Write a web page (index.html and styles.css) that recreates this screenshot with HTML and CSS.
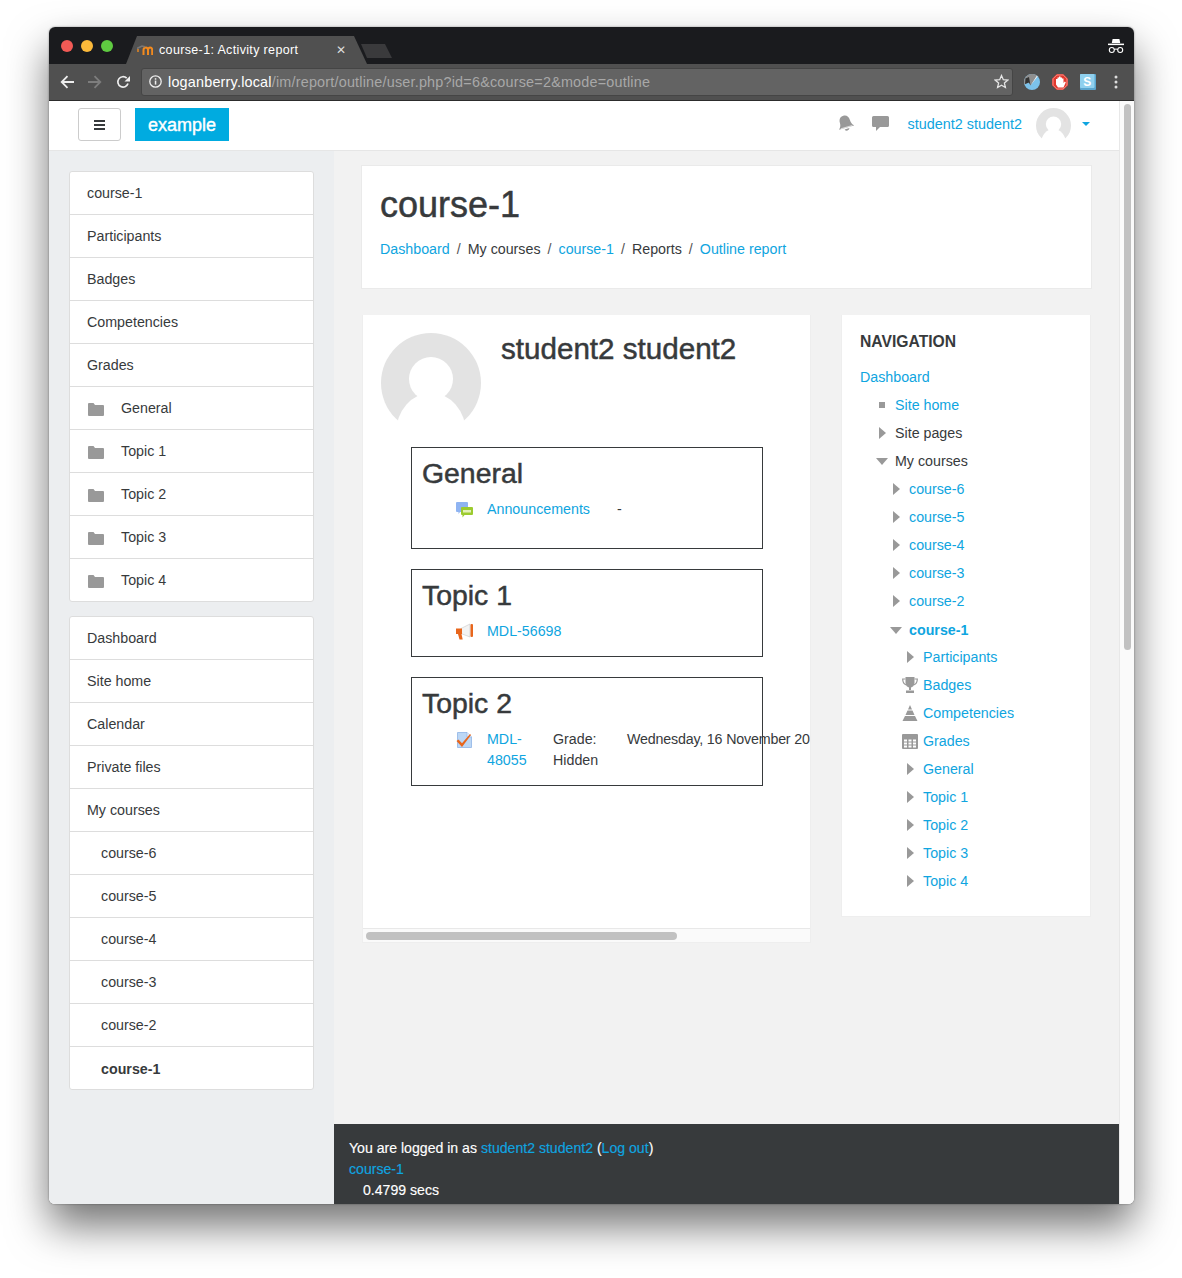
FILE: index.html
```html
<!DOCTYPE html>
<html lang="en">

<head>
    <meta charset="UTF-8" />
    <title>course-1: Activity report</title>
    <link rel="stylesheet" href="styles.css">
</head>

<body>
    <div class="window">
        <!-- Browser chrome -->
        <div class="titlebar">
            <div class="lights"><i class="red"></i><i class="yellow"></i><i class="green"></i></div>
            <div class="tab">
                <svg class="favicon" width="16" height="10" viewBox="0 0 16 10"><path d="M6.500 10V5c0-1.500 1-2.500 2.300-2.500S11 3.500 11 5v5M11 5c0-1.500 1-2.500 2.200-2.500S15.200 3.500 15.200 5v5" fill="none" stroke="#f28a1e" stroke-width="2"/><path d="M0 3.500 5 1l3 .8" fill="none" stroke="#777" stroke-width="1.600"/><path d="M1 4v3" stroke="#f28a1e" stroke-width="1.400"/></svg>
                <span class="tab-title">course-1: Activity report</span>
                <span class="tab-close">&#10005;</span>
            </div>
            <div class="new-tab"></div>
            <svg class="incognito" width="16" height="16" viewBox="0 0 16 16"><path d="M4.600 1h6.800l.8 4H3.800z" fill="#fff"/><rect x="0" y="5.600" width="16" height="1.500" fill="#fff"/><g fill="none" stroke="#fff" stroke-width="1.100"><circle cx="3.800" cy="12" r="2.500"/><circle cx="12.200" cy="12" r="2.500"/><path d="M6.300 11.500c1-.6 2.400-.6 3.400 0"/></g></svg>
        </div>
        <div class="toolbar">
            <span class="tool"><svg width="14" height="14" viewBox="0 0 14 14"><path d="M14 7H2M7.500 1.200 1.700 7l5.800 5.800" fill="none" stroke="#eee" stroke-width="1.800"/></svg></span>
            <span class="tool"><svg width="14" height="14" viewBox="0 0 14 14"><path d="M0 7h12M6.500 1.200 12.300 7l-5.800 5.800" fill="none" stroke="#7d7d7d" stroke-width="1.800"/></svg></span>
            <span class="tool"><svg width="14" height="14" viewBox="0 0 14 14"><path d="M12 8.500A5.200 5.200 0 1 1 10.700 3.200" fill="none" stroke="#eee" stroke-width="1.700"/><path d="M14 1v5.500H8.500z" fill="#eee"/></svg></span>
            <div class="address">
                <svg width="13" height="13" viewBox="0 0 13 13"><circle cx="6.500" cy="6.500" r="5.700" fill="none" stroke="#eee" stroke-width="1.300"/><rect x="5.800" y="5.600" width="1.500" height="4" fill="#eee"/><rect x="5.800" y="3.200" width="1.500" height="1.500" fill="#eee"/></svg>
                <span class="url"><b>loganberry.local</b>/im/report/outline/user.php?id=6&amp;course=2&amp;mode=outline</span>
                <svg class="star" width="15" height="15" viewBox="0 0 15 15"><path d="M7.500 1.500 9.300 5.700l4.500.4-3.400 3 1 4.400-3.900-2.300-3.900 2.300 1-4.400-3.400-3 4.500-.4z" fill="none" stroke="#e4e4e4" stroke-width="1.300"/></svg>
            </div>
            <div class="extensions">
                <span class="tool"><svg width="16" height="16" viewBox="0 0 16 16"><circle cx="8" cy="8" r="8" fill="#7cc2ea"/><path d="M8 0A8 8 0 0 0 0 8c0 1 .2 1.700.5 2.500L5 8.500l1.500 3L13.500 2A8 8 0 0 0 8 0z" fill="#8f8f8f"/><path d="M1.500 4.500 5 3l1.500 8.500L5 8.500 1 10z" fill="#333"/><path d="M13 1.500 6.500 11.500 13.500 2.500z" fill="#fff"/></svg></span>
                <span class="tool"><svg width="16" height="16" viewBox="0 0 16 16"><path d="M4.800 0h6.400L16 4.800v6.400L11.200 16H4.800L0 11.200V4.800z" fill="#e3382d"/><path d="M4.800 1h6.400L15 4.800v6.400L11.200 15H4.800L1 11.200V4.800z" fill="none" stroke="#f7b5b0" stroke-width=".7"/><path d="M4 8V5h1.500V3.500H7V2.500h1.500v1H10v1h1.500V9l1.300-1.500 1 .8L11.500 13.500H6L4 10.500z" fill="#fff"/></svg></span>
                <span class="tool"><svg width="16" height="16" viewBox="0 0 16 16"><rect width="16" height="16" rx="1" fill="#5ba6cf"/><rect width="14.500" height="14" rx="1" fill="#8fd0ee"/><text x="3.300" y="11.500" class="ext-s">S</text></svg></span>
                <span class="tool"><svg width="4" height="14" viewBox="0 0 4 14"><circle cx="2" cy="2" r="1.500" fill="#ddd"/><circle cx="2" cy="7" r="1.500" fill="#ddd"/><circle cx="2" cy="12" r="1.500" fill="#ddd"/></svg></span>
            </div>
        </div>

        <div class="viewport">
            <div class="page">
                <header class="navbar">
                    <button class="menu-btn"><span></span><span></span><span></span></button>
                    <a class="brand">example</a>
                    <div class="usernav">
                        <svg class="nav-icon" width="17" height="17" viewBox="0 0 17 17"><g transform="rotate(-16 8.500 8.500)"><path d="M8.500 .5c-3.300 0-5.200 2.400-5.200 5.500 0 3.600-1.100 5.200-2.800 6.800h16c-1.700-1.600-2.800-3.200-2.800-6.800 0-3.100-1.900-5.500-5.200-5.500z" fill="#999"/><path d="M6 14a2.600 2.600 0 0 0 5 0z" fill="#999"/><path d="M2.500 12.300h12" stroke="#fff" stroke-width=".6"/></g></svg>
                        <svg class="nav-icon chat" width="17" height="15" viewBox="0 0 17 15"><path d="M1.500 0h14A1.500 1.500 0 0 1 17 1.500v8a1.500 1.500 0 0 1-1.500 1.500H8l-4 4v-4H1.500A1.500 1.500 0 0 1 0 9.500v-8A1.500 1.500 0 0 1 1.500 0z" fill="#999"/></svg>
                        <a class="username">student2 student2</a>
                        <svg class="avatar-small" viewBox="0 0 100 100"><circle cx="50" cy="50" r="50" fill="#e3e3e3"/><circle cx="50" cy="46" r="22" fill="#fff"/><ellipse cx="50" cy="100" rx="35" ry="40" fill="#fff"/></svg>
                        <span class="caret"></span>
                    </div>
                </header>

                <div class="columns">
                    <aside class="sidebar">
                        <ul class="side-list">
                            <li>course-1</li>
                            <li>Participants</li>
                            <li>Badges</li>
                            <li>Competencies</li>
                            <li>Grades</li>
                            <li class="with-icon"><svg width="16" height="13" viewBox="0 0 16 13"><path d="M0 1a1 1 0 0 1 1-1h4.500L7 2h8a1 1 0 0 1 1 1v9a1 1 0 0 1-1 1H1a1 1 0 0 1-1-1z" fill="#999"/></svg>General</li>
                            <li class="with-icon"><svg width="16" height="13" viewBox="0 0 16 13"><path d="M0 1a1 1 0 0 1 1-1h4.500L7 2h8a1 1 0 0 1 1 1v9a1 1 0 0 1-1 1H1a1 1 0 0 1-1-1z" fill="#999"/></svg>Topic 1</li>
                            <li class="with-icon"><svg width="16" height="13" viewBox="0 0 16 13"><path d="M0 1a1 1 0 0 1 1-1h4.500L7 2h8a1 1 0 0 1 1 1v9a1 1 0 0 1-1 1H1a1 1 0 0 1-1-1z" fill="#999"/></svg>Topic 2</li>
                            <li class="with-icon"><svg width="16" height="13" viewBox="0 0 16 13"><path d="M0 1a1 1 0 0 1 1-1h4.500L7 2h8a1 1 0 0 1 1 1v9a1 1 0 0 1-1 1H1a1 1 0 0 1-1-1z" fill="#999"/></svg>Topic 3</li>
                            <li class="with-icon"><svg width="16" height="13" viewBox="0 0 16 13"><path d="M0 1a1 1 0 0 1 1-1h4.500L7 2h8a1 1 0 0 1 1 1v9a1 1 0 0 1-1 1H1a1 1 0 0 1-1-1z" fill="#999"/></svg>Topic 4</li>
                        </ul>
                        <ul class="side-list">
                            <li>Dashboard</li>
                            <li>Site home</li>
                            <li>Calendar</li>
                            <li>Private files</li>
                            <li>My courses</li>
                            <li class="nested">course-6</li>
                            <li class="nested">course-5</li>
                            <li class="nested">course-4</li>
                            <li class="nested">course-3</li>
                            <li class="nested">course-2</li>
                            <li class="nested current">course-1</li>
                        </ul>
                    </aside>

                    <main class="main">
                        <div class="course-header">
                            <h1>course-1</h1>
                            <ol class="breadcrumb">
                                <li><a>Dashboard</a></li>
                                <li>My courses</li>
                                <li><a>course-1</a></li>
                                <li>Reports</li>
                                <li><a>Outline report</a></li>
                            </ol>
                        </div>

                        <div class="content-row">
                            <section class="region">
                                <div class="region-scroll">
                                    <div class="user-head">
                                        <svg class="avatar" viewBox="0 0 100 100"><circle cx="50" cy="50" r="50" fill="#e3e3e3"/><circle cx="50" cy="46" r="22" fill="#fff"/><ellipse cx="50" cy="100" rx="35" ry="40" fill="#fff"/></svg>
                                        <h2>student2 student2</h2>
                                    </div>

                                    <div class="outline-section first">
                                        <h3>General</h3>
                                        <div class="activity">
                                            <svg class="activity-icon" width="17" height="16" viewBox="0 0 17 16"><path d="M1 0h10a1 1 0 0 1 1 1v8a1 1 0 0 1-1 1H4l-1.500 2V10H1a1 1 0 0 1-1-1V1a1 1 0 0 1 1-1z" fill="#8fb4f2"/><path d="M6 5h10a1 1 0 0 1 1 1v6a1 1 0 0 1-1 1H8.500L6.500 15.500V13H6a1 1 0 0 1-1-1V6a1 1 0 0 1 1-1z" fill="#9ccb2f"/><rect x="7" y="8" width="8" height="2.500" fill="#e2f0b8"/></svg>
                                            <a class="activity-name wide">Announcements</a>
                                            <span>-</span>
                                        </div>
                                    </div>

                                    <div class="outline-section">
                                        <h3>Topic 1</h3>
                                        <div class="activity">
                                            <svg class="activity-icon" width="17" height="16" viewBox="0 0 17 16"><path d="M5 4.500 14 0v13L5 9.500z" fill="#f3f3f3" stroke="#c8c8c8" stroke-width=".6"/><path d="M0 4.500h6v5.500H0z" fill="#e8661c"/><path d="M2 10h3.500l1.200 5.500H3.500z" fill="#e8661c"/><rect x="14.500" y="0" width="2.500" height="13" rx="1" fill="#e8661c"/></svg>
                                            <a class="activity-name">MDL-56698</a>
                                        </div>
                                    </div>

                                    <div class="outline-section">
                                        <h3>Topic 2</h3>
                                        <div class="activity">
                                            <svg class="activity-icon" width="16" height="16" viewBox="0 0 16 16"><path d="M1 .5h9.500L15 5v10.500H1z" fill="#bcd7f5" stroke="#8fb4e6" stroke-width=".8"/><path d="M10.500 .5V5H15" fill="#e6effa" stroke="#8fb4e6" stroke-width=".6"/><path d="M0 9 2 7.500l3.500 3.800L13.500 2l1 1L5.500 15z" fill="#e8661c"/></svg>
                                            <a class="activity-name narrow">MDL-48055</a>
                                            <span class="activity-grade">Grade: Hidden</span>
                                            <span class="activity-date">Wednesday, 16 November 20</span>
                                        </div>
                                    </div>
                                </div>
                                <div class="h-scrollbar"><span class="h-thumb"></span></div>
                            </section>

                            <section class="nav-block">
                                <h4>NAVIGATION</h4>
                                <ul class="tree">
                                    <li><p><a>Dashboard</a></p>
                                        <ul>
                                            <li><p><i class="leaf"></i><a>Site home</a></p></li>
                                            <li><p><i class="closed"></i>Site pages</p></li>
                                            <li><p><i class="open"></i>My courses</p>
                                                <ul>
                                                    <li><p><i class="closed"></i><a>course-6</a></p></li>
                                                    <li><p><i class="closed"></i><a>course-5</a></p></li>
                                                    <li><p><i class="closed"></i><a>course-4</a></p></li>
                                                    <li><p><i class="closed"></i><a>course-3</a></p></li>
                                                    <li><p><i class="closed"></i><a>course-2</a></p></li>
                                                    <li><p class="active-course"><i class="open"></i><a>course-1</a></p>
                                                        <ul>
                                                            <li><p><i class="closed"></i><a>Participants</a></p></li>
                                                            <li><p><svg class="tree-icon" width="16" height="16" viewBox="0 0 16 16"><path d="M3.500 0h9v6a4.500 4.500 0 0 1-9 0z" fill="#999"/><path d="M3.500 2H.7c0 3 1 5 3.600 6M12.500 2h2.800c0 3-1 5-3.600 6" fill="none" stroke="#999" stroke-width="1.200"/><path d="M7 10h2v3H7zM4 13.500h8V16H4z" fill="#999"/></svg><a>Badges</a></p></li>
                                                            <li><p><svg class="tree-icon" width="16" height="16" viewBox="0 0 16 16"><path d="M8 0l2 4.500H6zM5.500 5.500h5l2 4.500h-9zM3 11h10l2.500 5H.5z" fill="#999"/></svg><a>Competencies</a></p></li>
                                                            <li><p><svg class="tree-icon" width="16" height="16" viewBox="0 0 16 16"><path d="M1 1h14a1 1 0 0 1 1 1v13a1 1 0 0 1-1 1H1a1 1 0 0 1-1-1V2a1 1 0 0 1 1-1z" fill="#999"/><path d="M2 6.500h3v2H2zM6.500 6.500h3v2h-3zM11 6.500h3v2h-3zM2 9.500h3v2H2zM6.500 9.500h3v2h-3zM11 9.500h3v2h-3zM2 12.500h3v2H2zM6.500 12.500h3v2h-3zM11 12.500h3v2h-3z" fill="#fff"/></svg><a>Grades</a></p></li>
                                                            <li><p><i class="closed"></i><a>General</a></p></li>
                                                            <li><p><i class="closed"></i><a>Topic 1</a></p></li>
                                                            <li><p><i class="closed"></i><a>Topic 2</a></p></li>
                                                            <li><p><i class="closed"></i><a>Topic 3</a></p></li>
                                                            <li><p><i class="closed"></i><a>Topic 4</a></p></li>
                                                        </ul>
                                                    </li>
                                                </ul>
                                            </li>
                                        </ul>
                                    </li>
                                </ul>
                            </section>
                        </div>

                        <footer class="footer">
                            <div>You are logged in as <a>student2 student2</a> (<a>Log out</a>)</div>
                            <div><a>course-1</a></div>
                            <div class="perf">0.4799 secs</div>
                        </footer>
                    </main>
                </div>
            </div>
            <div class="v-scrollbar"><span class="v-thumb"></span></div>
        </div>
    </div>
</body>

</html>
```

FILE: styles.css
```css
* {
    box-sizing: border-box;
}

html {
    background: #fff;
}

body {
    margin: 0;
    padding: 27px 48px 0 49px;
    height: 1278px;
    overflow: hidden;
    font-family: "Liberation Sans", Arial, sans-serif;
    font-size: 14.25px;
    color: #373a3c;
}

a {
    color: #0fa5e0;
}

ul,
ol {
    list-style: none;
    margin: 0;
    padding: 0;
}

.window {
    width: 1085px;
    height: 1177px;
    border-radius: 6px;
    overflow: hidden;
    display: flex;
    flex-direction: column;
    box-shadow: 0 22px 42px rgba(0, 0, 0, 0.55), 0 0 2px rgba(0, 0, 0, 0.45);
}

/* Browser chrome */
.titlebar {
    height: 37px;
    background: #1a1b1e;
    display: flex;
    align-items: flex-end;
    flex-shrink: 0;
}

.lights {
    display: flex;
    gap: 8px;
    padding: 0 0 12px 12px;
}

.lights i {
    width: 12px;
    height: 12px;
    border-radius: 50%;
}

.lights .red {
    background: #f25a55;
}

.lights .yellow {
    background: #fbb93a;
}

.lights .green {
    background: #5fcb41;
}

.tab {
    width: 241px;
    height: 28px;
    margin-left: 13px;
    padding-left: 15px;
    background: #505050;
    clip-path: polygon(0 100%, 11px 0, 228px 0, 100% 100%);
    display: flex;
    align-items: center;
    color: #fff;
}

.favicon {
    flex-shrink: 0;
    margin-left: -4px;
}

.tab-title {
    margin-left: 6px;
    font-size: 12.5px;
    letter-spacing: 0.35px;
    white-space: nowrap;
}

.tab-close {
    margin-left: 38px;
    font-size: 12px;
    color: #ddd;
}

.new-tab {
    width: 31px;
    height: 14px;
    margin: 0 0 6px -6px;
    background: #3a3a3c;
    clip-path: polygon(0 0, 24px 0, 100% 100%, 6px 100%);
}

.incognito {
    margin: 0 10px 10px auto;
}

.toolbar {
    height: 37px;
    background: #505050;
    border-bottom: 1px solid #2c2c2c;
    display: flex;
    align-items: center;
    padding: 0 4px 1px;
    flex-shrink: 0;
}

.tool {
    width: 28px;
    display: flex;
    justify-content: center;
    align-items: center;
}

.address {
    width: 872px;
    height: 28px;
    margin-left: 4px;
    padding: 0 3px 0 7px;
    background: #636363;
    border: 1px solid #454545;
    border-radius: 3px;
    display: flex;
    align-items: center;
}

.url {
    margin-left: 6px;
    font-size: 14.4px;
    letter-spacing: 0.2px;
    color: #a8a8a8;
    white-space: nowrap;
}

.url b {
    font-weight: 400;
    color: #fff;
}

.star {
    margin-left: auto;
}

.extensions {
    display: flex;
    margin-left: 5px;
}

.ext-s {
    font-size: 12px;
    font-weight: 700;
    fill: #fff;
}

/* Page */
.viewport {
    flex: 1;
    display: flex;
    min-height: 0;
    background: #fff;
}

.page {
    flex: 1;
    display: flex;
    flex-direction: column;
    min-width: 0;
}

.v-scrollbar {
    width: 15px;
    padding: 3px 3px 0 4px;
    background: #fafafa;
    border-left: 1px solid #e8e8e8;
}

.v-thumb {
    display: block;
    height: 546px;
    background: #c1c1c1;
    border-radius: 4px;
}

.navbar {
    height: 50px;
    flex-shrink: 0;
    background: #fff;
    border-bottom: 1px solid #e6e6e6;
    display: flex;
    align-items: flex-start;
    padding: 7px 29px 0;
}

.menu-btn {
    width: 43px;
    height: 33px;
    padding: 0;
    background: #fff;
    border: 1px solid #ccc;
    border-radius: 3px;
    display: flex;
    flex-direction: column;
    align-items: center;
    justify-content: center;
    gap: 2px;
}

.menu-btn span {
    width: 11px;
    height: 2px;
    background: #373a3c;
}

.brand {
    width: 94px;
    height: 33px;
    margin-left: 14px;
    background: #00abe0;
    color: #fff;
    font-size: 18px;
    font-weight: 400;
    line-height: 35px;
    text-align: center;
    -webkit-text-stroke: 0.4px #fff;
}

.usernav {
    margin-left: auto;
    display: flex;
    align-items: center;
    height: 31px;
    font-size: 14.4px;
}

.nav-icon {
    display: block;
}

.chat {
    margin-left: 18px;
}

.username {
    margin-left: 19px;
}

.avatar-small {
    width: 35px;
    height: 35px;
    margin-left: 14px;
    align-self: flex-start;
}

.caret {
    width: 0;
    height: 0;
    margin: 0 0 0 11px;
    border: 4px solid transparent;
    border-top-color: #0fa5e0;
    border-bottom: 0;
}

.columns {
    flex: 1;
    display: flex;
    min-height: 0;
}

/* Left drawer */
.sidebar {
    width: 285px;
    flex-shrink: 0;
    padding: 20px 20px 0;
    background: #eceef0;
    display: flex;
    flex-direction: column;
    gap: 14px;
}

.side-list {
    background: #fff;
    border: 1px solid #ddd;
    border-radius: 3px;
}

.side-list li {
    height: 43px;
    padding-left: 17px;
    border-bottom: 1px solid #ddd;
    display: flex;
    align-items: center;
}

.side-list li:last-child {
    height: 42px;
    border-bottom: 0;
}

.side-list .with-icon svg {
    margin: 2px 17px 0 1px;
}

.side-list .nested {
    padding-left: 31px;
}

.side-list .current {
    font-weight: 700;
    padding-top: 2px;
}

/* Main column */
.main {
    flex: 1;
    min-width: 0;
    padding-top: 14px;
    background: #f2f2f2;
    display: flex;
    flex-direction: column;
}

.course-header {
    height: 124px;
    margin: 0 27px;
    padding: 17px 18px 0;
    background: #fff;
    border: 1px solid #eaeaea;
}

h1 {
    margin: 0;
    font-size: 36px;
    font-weight: 400;
    line-height: 43px;
    -webkit-text-stroke: 0.5px #373a3c;
}

.breadcrumb {
    display: flex;
    margin-top: 12px;
    line-height: 22px;
}

.breadcrumb li + li::before {
    content: "/";
    padding: 0 7px;
    color: #555;
}

.content-row {
    display: flex;
    align-items: flex-start;
    margin: 26px 0 0 28px;
}

.region {
    width: 449px;
    background: #fff;
    border: 1px solid #eee;
    border-top: 0;
}

.region-scroll {
    height: 613px;
    padding: 18px 0 0 18px;
    overflow: hidden;
}

.user-head {
    display: flex;
    height: 114px;
}

.avatar {
    width: 100px;
    height: 100px;
    flex-shrink: 0;
}

h2 {
    margin: 0 0 0 20px;
    font-size: 29.6px;
    font-weight: 400;
    line-height: 32px;
    -webkit-text-stroke: 0.5px #373a3c;
}

.outline-section {
    width: 352px;
    margin: 0 0 20px 30px;
    padding: 8px 10px 14px;
    border: 1px solid #373a3c;
}

.outline-section.first {
    padding-bottom: 28px;
}

h3 {
    margin: 0 0 9px;
    font-size: 28.4px;
    font-weight: 400;
    line-height: 34px;
    -webkit-text-stroke: 0.5px #373a3c;
}

.activity {
    display: flex;
    align-items: flex-start;
    padding-left: 34px;
    line-height: 21px;
}

.activity-icon {
    width: 31px;
    flex-shrink: 0;
    margin-top: 3px;
    padding-right: 14px;
    overflow: visible;
}

.activity-name {
    flex-shrink: 0;
}

.activity-name.wide {
    width: 130px;
}

.activity-name.narrow {
    width: 66px;
}

.activity-grade {
    width: 74px;
    flex-shrink: 0;
}

.activity-date {
    flex-shrink: 0;
    white-space: nowrap;
    letter-spacing: -0.18px;
}

.h-scrollbar {
    height: 14px;
    padding: 3px 0 0 3px;
    background: #fafafa;
    border-top: 1px solid #e8e8e8;
}

.h-thumb {
    display: block;
    width: 311px;
    height: 8px;
    background: #c1c1c1;
    border-radius: 4px;
}

/* Navigation block */
.nav-block {
    width: 250px;
    height: 602px;
    margin-left: 30px;
    padding: 18px 18px 0;
    background: #fff;
    border: 1px solid #eee;
    border-top: 0;
}

h4 {
    margin: 0 0 12px;
    font-size: 15.7px;
    font-weight: 700;
    line-height: 18px;
}

.tree ul {
    padding-left: 14px;
}

.tree p {
    margin: 0;
    height: 28px;
    display: flex;
    align-items: center;
}

.tree .active-course {
    font-weight: 700;
    padding-top: 1px;
}

.tree i,
.tree-icon {
    width: 21px;
    flex-shrink: 0;
    position: relative;
}

.tree-icon {
    padding-right: 5px;
}

.tree i::before {
    content: "";
    position: absolute;
    top: 50%;
    left: 5px;
}

.tree .closed::before {
    margin-top: -6px;
    border-left: 7px solid #999;
    border-top: 6px solid transparent;
    border-bottom: 6px solid transparent;
}

.tree .open::before {
    left: 2px;
    margin-top: -3px;
    border-top: 7px solid #999;
    border-left: 6px solid transparent;
    border-right: 6px solid transparent;
}

.tree .leaf::before {
    margin-top: -3px;
    width: 6px;
    height: 6px;
    background: #999;
}

/* Footer */
.footer {
    margin-top: auto;
    height: 80px;
    flex-shrink: 0;
    padding: 14px 15px 0;
    background: #373a3c;
    color: #fff;
    font-size: 14.1px;
    line-height: 21px;
    white-space: nowrap;
    overflow: hidden;
    -webkit-text-stroke: 0.15px;
}

.perf {
    padding-left: 14px;
}
```
